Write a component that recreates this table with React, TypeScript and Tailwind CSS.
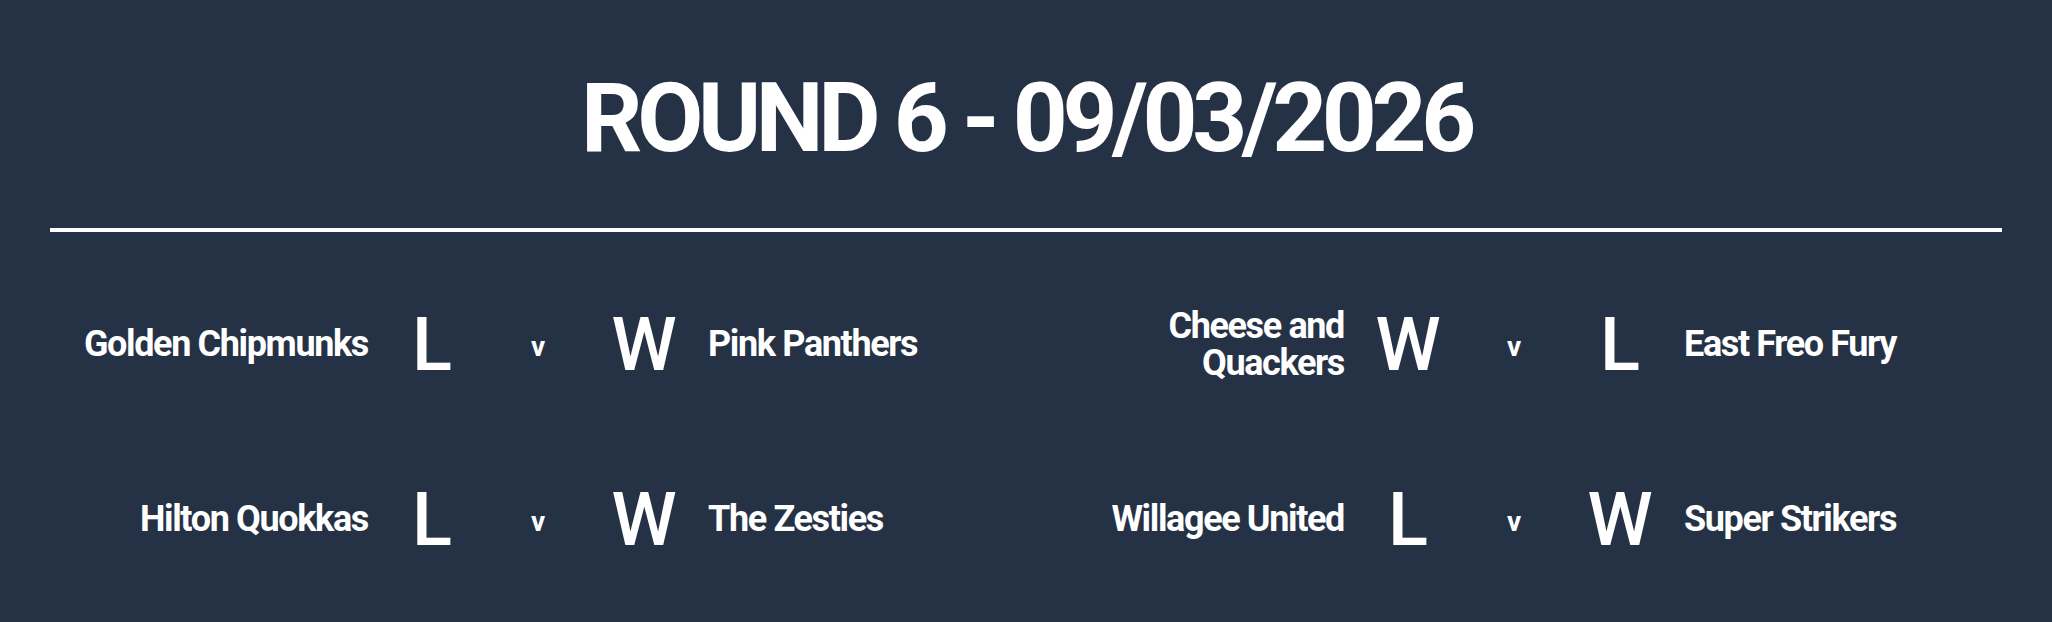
type Side = { team: string; result: 'W' | 'L' }

interface Match {
  home: Side
  away: Side
}

const MATCHES: Match[] = [
  { home: { team: 'Golden Chipmunks', result: 'L' }, away: { team: 'Pink Panthers', result: 'W' } },
  { home: { team: 'Cheese and Quackers', result: 'W' }, away: { team: 'East Freo Fury', result: 'L' } },
  { home: { team: 'Hilton Quokkas', result: 'L' }, away: { team: 'The Zesties', result: 'W' } },
  { home: { team: 'Willagee United', result: 'L' }, away: { team: 'Super Strikers', result: 'W' } },
]

function MatchRow({ match }: { match: Match }) {
  return (
    <div className="flex items-center h-[175px]">
      {/* Home */}
      <div className="flex-1 min-w-0 text-right text-[36px] leading-[37px] font-bold tracking-[-0.038em]">
        {match.home.team}
      </div>
      <div className="w-[80px] ml-[24px] text-center text-[74px] leading-none font-medium">
        {match.home.result}
      </div>

      <div className="w-[132px] text-center text-[28px] leading-none font-bold pt-[4px]">v</div>

      {/* Away */}
      <div className="w-[80px] text-center text-[74px] leading-none font-medium">
        {match.away.result}
      </div>
      <div className="flex-1 min-w-0 ml-[24px] text-left text-[36px] leading-[37px] font-bold tracking-[-0.038em]">
        {match.away.team}
      </div>
    </div>
  )
}

export default function App() {
  return (
    <div className="w-full h-[622px] bg-[#253245] text-white px-[50px] font-['Roboto',sans-serif]">
      <h1 className="pt-[70px] text-center text-[96px] leading-none font-bold tracking-[-0.056em]">
        ROUND 6 - 09/03/2026
      </h1>

      <div className="mt-[62px] h-1 bg-white" />

      <div className="mt-[25px] grid grid-cols-2">
        {MATCHES.map((m, i) => (
          <MatchRow key={i} match={m} />
        ))}
      </div>
    </div>
  )
}
